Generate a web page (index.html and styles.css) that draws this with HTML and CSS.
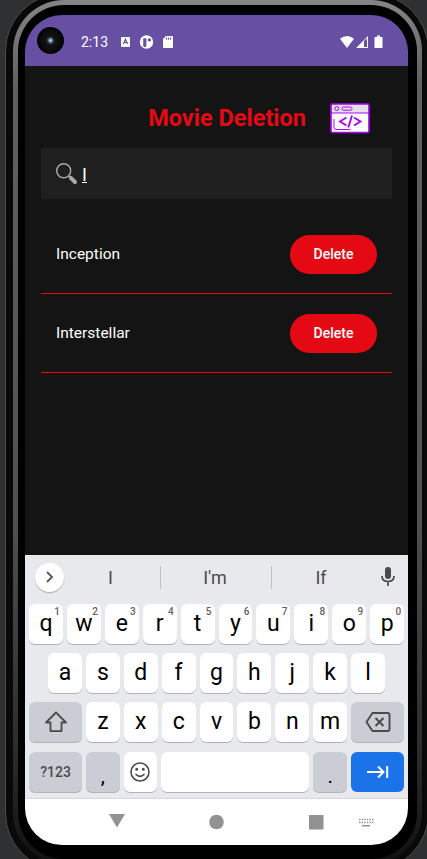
FILE: index.html
```html
<!DOCTYPE html>
<html lang="en">
<head>
<meta charset="utf-8">
<title>Movie Deletion</title>
<link rel="stylesheet" href="styles.css">
</head>
<body>
<div class="phone"><div class="rim"><div class="bezel">
<div class="screen">
  <header class="status">
    <span class="camera"></span>
    <span class="time">2:13</span>
    <svg class="s-left" width="54" height="14" viewBox="0 0 54 14"><rect x="1" y="2" width="9" height="10" rx="1" fill="#fff"/><path d="M3.400 9 5.500 4.200 7.600 9M4.100 7.500h2.800" fill="none" stroke="#6750a4" stroke-width="1.2"/><circle cx="26.500" cy="7" r="6.7" fill="#fff"/><path d="M23.200 3.200h3.200v7.300a1.600 1.600 0 0 1-3.200 0z" fill="#6750a4"/><circle cx="29.400" cy="4.900" r="1.7" fill="#6750a4"/><path d="M46 1h6q1 0 1 1v10q0 1-1 1h-8q-1 0-1-1V4z" fill="#fff"/><path d="M46.600 2.500v2.300M48.600 2.500v2.300M50.600 2.500v2.300" stroke="#6750a4"/></svg>
    <svg class="s-right" width="44" height="14" viewBox="0 0 44 14" fill="#fff"><path d="M0 3.700Q7-1.600 14 3.700L7 13z"/><path fill-rule="evenodd" d="M28 1v12H16zm-4 5v6h3V3.200z"/><path d="M37 .500h3V2h2.500v11h-8V2H37z"/></svg>
  </header>
  <main class="app">
    <div class="title"><h1>Movie Deletion</h1>
      <svg width="40" height="32" viewBox="0 0 40 32"><rect x="1" y="2" width="38" height="28.500" rx="1.5" fill="#fff"/><path d="M1 2h38v9H1z" fill="#e5dfe8"/><g fill="none" stroke="#a506f5" stroke-width="1"><rect x="1" y="2" width="38" height="28.500" rx="1.5" stroke-width="1.7"/><path d="M1 11h38M4 17v8.500q0 2 2 2h14"/><circle cx="6.800" cy="6.500" r="2"/><rect x="12" y="5" width="10" height="3.200" rx="1.6"/><path d="m16.500 15.500-6.500 4 6.500 4M24 15.500l6.500 4-6.500 4M22 13.500l-3.700 12" stroke-width="1.9"/></g></svg>
    </div>
    <div class="search"><svg width="22" height="22" viewBox="0 0 22 22" fill="none" stroke="#aaa"><circle cx="7.700" cy="7.700" r="7" stroke-width="1.4"/><path d="m12.600 12.800 2 2" stroke-width="1.5"/><path d="m14.800 14.800 4.200 4.200" stroke-width="4" stroke-linecap="round"/></svg><u>I</u></div>
    <ul class="movies">
      <li><span>Inception</span><button>Delete</button></li>
      <li><span>Interstellar</span><button>Delete</button></li>
    </ul>
  </main>
  <section class="keyboard">
    <div class="suggest">
      <span class="more"><svg width="10" height="14" viewBox="0 0 10 14"><path d="m2 2 5 5-5 5" fill="none" stroke="#555" stroke-width="1.8"/></svg></span>
      <span class="word">I</span><span class="word mid">I'm</span><span class="word last">If</span>
      <svg class="mic" width="16" height="20" viewBox="0 0 16 20"><rect x="5" y="0" width="6" height="12" rx="3" fill="#494a4d"/><path d="M2 9q0 5.500 6 5.500T14 9M8 14v5" fill="none" stroke="#494a4d" stroke-width="1.7"/></svg>
    </div>
    <div class="row"><b>q<i>1</i></b><b>w<i>2</i></b><b>e<i>3</i></b><b>r<i>4</i></b><b>t<i>5</i></b><b>y<i>6</i></b><b>u<i>7</i></b><b>i<i>8</i></b><b>o<i>9</i></b><b>p<i>0</i></b></div>
    <div class="row home"><b>a</b><b>s</b><b>d</b><b>f</b><b>g</b><b>h</b><b>j</b><b>k</b><b>l</b></div>
    <div class="row third"><b class="wide grey"><svg width="24" height="22" viewBox="0 0 24 22"><path d="M12 1.500 22 11.500h-4.500v8.700h-11v-8.700H2z" fill="none" stroke="#494a4d" stroke-width="1.8" stroke-linejoin="round"/></svg></b><b>z</b><b>x</b><b>c</b><b>v</b><b>b</b><b>n</b><b>m</b><b class="wide grey"><svg width="26" height="20" viewBox="0 0 26 20" fill="none" stroke="#494a4d" stroke-width="1.9"><path d="M7.500 1h15q2 0 2 2v14q0 2-2 2h-15L1.500 10z" stroke-linejoin="round"/><path d="m10.500 6 8 8m0-8-8 8"/></svg></b></div>
    <div class="row fourth"><b class="wide grey sym">?123</b><b class="grey low">,</b><b><svg width="20" height="20" viewBox="0 0 20 20" fill="none" stroke="#494a4d" stroke-width="1.6"><circle cx="10" cy="10" r="9"/><path d="M5.500 12q4.500 4.800 9 0"/><circle cx="6.700" cy="7.300" r=".7"/><circle cx="13.300" cy="7.300" r=".7"/></svg></b><b class="space"></b><b class="grey low">.</b><b class="wide enter"><svg width="22" height="14" viewBox="0 0 22 14" fill="none" stroke="#fff" stroke-width="2"><path d="M0 7h16M11 1.500 16.500 7 11 12.500M20.200 1v12"/></svg></b></div>
  </section>
  <nav class="nav"><svg width="383" height="46" viewBox="0 0 383 46" fill="#929292"><path d="M84 15h16l-8 13.500z"/><circle cx="191.500" cy="23" r="7.300"/><rect x="284" y="16" width="14.500" height="14.500" rx=".5"/><path d="M334 20.500h15M334 23.500h15" stroke="#929292" stroke-width="1.300" stroke-dasharray="1.500 1.100"/><path d="M337 26h8v1.500h-8z"/></svg></nav>
</div>
</div></div></div>
</body>
</html>
```
FILE: styles.css
```css
* { box-sizing: border-box; }
body { margin: 0; width: 427px; height: 859px; overflow: hidden; background: #2f3032; font-family: Roboto, sans-serif; }
.phone { margin: -7px 0 0 5px; width: 424px; height: 878px; border-radius: 58px; background: #090909; border: 1px solid #4c4c4a; padding: 6px 6px 6px 7px; }
.rim { height: 864px; border-radius: 51px; background: linear-gradient(#858585, #606060 10%, #505050 60%, #2a2a2a 88%, #101010); padding: 5px; }
.bezel { height: 854px; border-radius: 46px; background: #000; padding: 10px 9px 0 7px; }
.screen { width: 383px; height: 830px; border-radius: 37px; overflow: hidden; display: flex; flex-direction: column; background: #141414; }
.status { height: 51px; flex: none; background: #6750a4; display: flex; align-items: center; color: #fff; padding: 3px 24px 0 12px; }
.camera { width: 27px; height: 27px; margin-top: -4px; border-radius: 50%; background: radial-gradient(circle, #a5bfd8 0 1px, #3c4a5b 2.5px, #111 4.5px, #0b0b0b 10px, #000 12px); }
.time { font-size: 14px; margin-left: 17px; width: 39px; }
.s-right { margin-left: auto; }
.app { height: 489px; flex: none; padding: 36px 16px 0; }
.title { height: 46px; display: flex; justify-content: flex-end; padding: 0 22px 0 0; gap: 24px; }
h1 { margin: 0; font-size: 23.5px; line-height: 32px; font-weight: 700; color: #e50914; }
.search { height: 51px; background: #1f1f1f; padding: 15px; display: flex; color: #fff; font-size: 18px; line-height: 23px; gap: 4px; }
.movies { list-style: none; margin: 0; padding: 16px 0 0; }
.movies li { height: 79px; border-bottom: 1px solid #e50914; padding: 0 15px; display: flex; align-items: center; justify-content: space-between; color: #fff; font-size: 15.5px; }
button { width: 87px; height: 39px; border: 0; border-radius: 20px; background: #e50914; color: #fff; font: 500 14px Roboto, sans-serif; }
.keyboard { height: 244px; flex: none; background: #e8e9ed; border-bottom: 1px solid #d5d6da; }
.suggest { height: 49px; display: flex; align-items: center; padding: 0 12px 5px 10px; color: #494a4d; font-size: 18px; }
.more { width: 29px; height: 29px; border-radius: 50%; background: #fff; box-shadow: 0 1px 1px #aaa; display: grid; place-items: center; }
.word { width: 96px; text-align: center; height: 23px; line-height: 24px; padding-right: 3px; }
.mid { width: 112px; border: solid #c0c1c4; border-width: 0 1px; padding: 0 2px 0 0; }
.last { width: 98px; padding: 0; }
.mic { margin-left: auto; }
.row { display: flex; gap: 4px; height: 40px; padding: 0 4px; margin-bottom: 9px; }
.row b { position: relative; flex: 1 1 0; display: grid; place-items: center; font-weight: 400; font-size: 23px; line-height: 38px; color: #000; background: #fff; border-radius: 6px; box-shadow: 0 1px 0 #b2b3b7; }
.row i { position: absolute; right: 3px; top: 1px; font: 500 10px/13px Roboto, sans-serif; color: #626366; }
.home { padding: 0 23px; }
.third { margin-bottom: 10px; }
.row .wide { flex: 0 0 53px; }
.row .grey { background: #cbcdd5; }
.row .sym { font-size: 14px; font-weight: 500; color: #494a4d; line-height: 40px; }
.fourth b { flex: 0 0 33.6px; }
.row .space { flex: 1 1 0; }
.row .low { padding-top: 8px; line-height: 32px; font-size: 21px; }
.row .enter { background: #1a73e8; box-shadow: none; }
.nav { height: 46px; background: #fff; }
```
